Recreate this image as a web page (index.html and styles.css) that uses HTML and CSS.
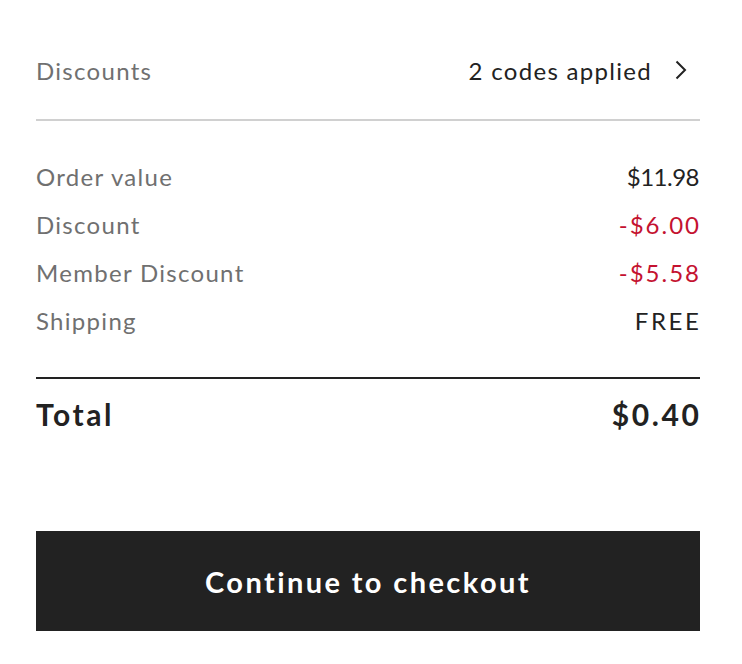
FILE: index.html
```html
<!DOCTYPE html>
<html>
<head>
<meta charset="utf-8">
<link rel="stylesheet" href="styles.css">
</head>
<body>
<div class="summary">
  <div class="discounts-row">
    <span class="label">Discounts</span>
    <span class="codes">2 codes applied
      <svg class="chev" width="12" height="20" viewBox="0 0 12 20"><path d="M1.5 1.5 L10 10 L1.5 18.5" fill="none" stroke="#222" stroke-width="2"/></svg>
    </span>
  </div>
  <div class="sep light"></div>
  <div class="rows">
    <div class="row"><span class="label">Order value</span><span class="val tight">$11.98</span></div>
    <div class="row"><span class="label">Discount</span><span class="val red">-$6.00</span></div>
    <div class="row"><span class="label">Member Discount</span><span class="val red">-$5.58</span></div>
    <div class="row"><span class="label">Shipping</span><span class="val free">FREE</span></div>
  </div>
  <div class="sep dark"></div>
  <div class="row total"><span>Total</span><span class="total-val">$0.40</span></div>
  <button class="checkout">Continue to checkout</button>
</div>
</body>
</html>
```
FILE: styles.css
```css
html, body { margin: 0; padding: 0; background: #fff; }
body { font-family: Lato, "Liberation Sans", sans-serif; color: #222; }
.summary { width: 664px; margin-left: 36px; padding-top: 46px; }
.discounts-row { display: flex; justify-content: space-between; align-items: center; height: 48px; font-size: 24px; letter-spacing: 1.3px; }
.label { color: #707070; }
.codes { display: flex; align-items: center; gap: 23px; color: #222; }
.chev { display: block; margin-right: 13px; }
.sep { height: 2px; }
.sep.light { background: #d0d0d0; margin-top: 25px; }
.sep.dark { background: #222; margin-top: 33px; }
.rows { margin-top: 31px; }
.row { display: flex; justify-content: space-between; align-items: center; height: 48px; font-size: 24px; letter-spacing: 1.3px; }
.val { color: #222; }
.val.tight { letter-spacing: -0.5px; margin-right: 1px; }
.val.red { color: #c41230; letter-spacing: 2px; margin-right: -1px; }
.val.free { letter-spacing: 2.6px; margin-right: -1.5px; }
.total { margin-top: 11px; font-size: 30px; font-weight: 700; letter-spacing: 2.6px; }
.total-val { margin-right: -1.5px; }
.checkout { display: block; width: 100%; height: 100px; margin-top: 93px; border: 0; background: #222; color: #fff; font-family: inherit; font-size: 29px; font-weight: 700; letter-spacing: 2.4px; }
```
